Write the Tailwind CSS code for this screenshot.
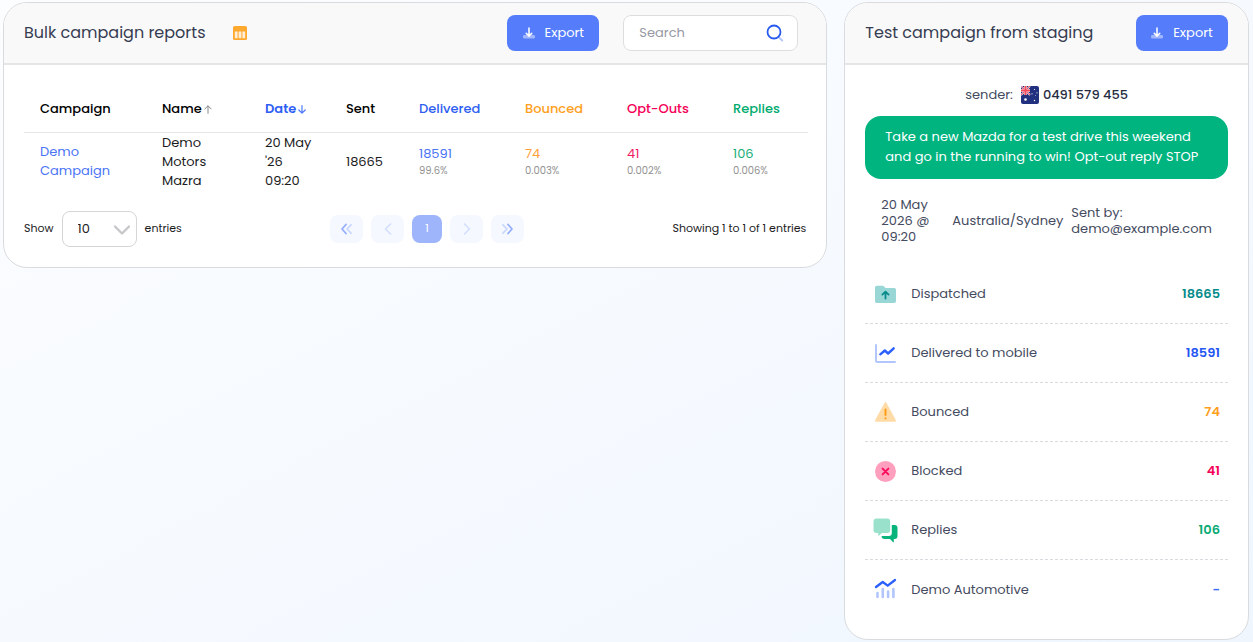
<!DOCTYPE html>
<html lang="en">
<head>
<meta charset="utf-8">
<meta name="viewport" content="width=device-width, initial-scale=1">
<title>Bulk campaign reports</title>
<script src="https://cdn.jsdelivr.net/npm/@tailwindcss/browser@4"></script>
</head>
<body class="min-h-screen bg-linear-to-br from-[#fcfdff] via-[#f6faff] to-[#eff6fe] font-[Poppins,Inter,sans-serif] text-[13px] text-black">
<main class="flex items-start gap-[17px] pt-[2px] pr-1 pb-[3px] pl-[3px]">

  <section class="min-w-0 flex-[825_1_0%] overflow-hidden rounded-3xl border border-[#d9dbde] bg-white">
    <header class="flex items-center border-b-2 border-[#e4e5e7] bg-[#f9f9f9] py-3 pr-7 pl-5">
      <h1 class="text-[16px] leading-6 text-[#363c52]">Bulk campaign reports</h1>
      <button type="button" aria-label="Choose columns" class="ml-[27px]">
        <svg width="14" height="14" viewBox="0 0 14 14"><rect width="14" height="14" rx="1.5" fill="#ffa92e"/><path d="M1.8 5.5h2.8v6.8H1.8zM5.6 5.5h2.8v6.8H5.6zM9.4 5.5h2.8v6.8H9.4z" fill="#ffeed5"/></svg>
      </button>
      <button type="button" class="ml-auto flex h-9 w-[92px] items-center justify-center gap-2.5 rounded-lg bg-[#557dfb] text-white">
        <svg width="12" height="13" viewBox="0 0 13 14"><path d="M1.5 8.5H4l2.5 2 2.500-2h2.500a1.500 1.500 0 0 1 1.500 1.500v1a1.500 1.500 0 0 1-1.500 1.500h-10A1.500 1.500 0 0 1 0 11v-1a1.500 1.500 0 0 1 1.500-1.500z" fill="#fff" opacity=".45"/><path d="M6.500 1.200v8M3.500 6.800l3 3 3-3" fill="none" stroke="#fff" stroke-width="1.700" stroke-linecap="round" stroke-linejoin="round"/></svg>
        Export
      </button>
      <label class="ml-6 flex h-9 w-[175px] items-center rounded-lg border border-[#dcdee0] bg-white pr-3 pl-[15px]">
        <input type="text" placeholder="Search" aria-label="Search" class="min-w-0 flex-1 bg-transparent outline-none placeholder:text-[#9699a2]">
        <svg width="20" height="20" viewBox="0 0 20 20" fill="none"><path d="M13.500 14l3.700 3.500" stroke="#b8c8fc" stroke-width="2" stroke-linecap="round"/><circle cx="9" cy="9" r="6.500" stroke="#285af0" stroke-width="1.800"/></svg>
      </label>
    </header>

    <div class="p-5">
      <table class="w-full table-fixed text-left">
        <colgroup><col class="w-[122px]"><col class="w-[103px]"><col class="w-[81px]"><col class="w-[73px]"><col class="w-[106px]"><col class="w-[102px]"><col class="w-[106px]"><col class="w-[91px]"></colgroup>
        <thead>
          <tr class="h-[47px] border-b border-[#e4e5e7] whitespace-nowrap">
            <th class="pl-4 font-medium">Campaign</th>
            <th class="pl-4 font-medium">Name<svg class="ml-[2px] inline-block align-[-1px]" width="8" height="9" viewBox="0 0 8 9" fill="none" stroke="#85878c" stroke-linecap="round" stroke-linejoin="round"><path d="M4 8.300V1M.8 4L4 .8 7.200 4"/></svg></th>
            <th class="pl-4 font-semibold text-[#2e60f5]">Date<svg class="ml-[2px] inline-block align-[-1px]" width="8" height="9" viewBox="0 0 8 9" fill="none" stroke="#4c78fa" stroke-width="1.200" stroke-linecap="round" stroke-linejoin="round"><path d="M4 .7V8M.8 5L4 8.200 7.200 5"/></svg></th>
            <th class="pl-4 font-medium">Sent</th>
            <th class="pl-4 font-medium text-[#2f5ff0]">Delivered</th>
            <th class="pl-4 font-medium text-[#ff9f22]">Bounced</th>
            <th class="pl-4 font-medium text-[#f50057]">Opt-Outs</th>
            <th class="pl-4 font-medium text-[#00ac70]">Replies</th>
          </tr>
        </thead>
        <tbody>
          <tr class="leading-[19px] text-[#1c1c1e]">
            <td class="pl-4"><a href="#" class="text-[#4a74f5]">Demo<br>Campaign</a></td>
            <td class="pl-4">Demo<br>Motors<br>Mazra</td>
            <td class="pl-4">20 May<br>'26<br>09:20</td>
            <td class="pl-4">18665</td>
            <td class="pl-4"><a href="#" class="block text-[#4a74f5]">18591</a><small class="block text-[10px] leading-4 text-[#929292]">99.6%</small></td>
            <td class="pl-4"><a href="#" class="block text-[#ff9f3a]">74</a><small class="block text-[10px] leading-4 text-[#929292]">0.003%</small></td>
            <td class="pl-4"><a href="#" class="block text-[#f01e62]">41</a><small class="block text-[10px] leading-4 text-[#929292]">0.002%</small></td>
            <td class="pl-4"><a href="#" class="block text-[#19ae79]">106</a><small class="block text-[10px] leading-4 text-[#929292]">0.006%</small></td>
          </tr>
        </tbody>
      </table>

      <div class="mt-[21px] flex items-center justify-between text-[11px] text-[#1c1c1e]">
        <div class="flex items-center gap-2">
          <label for="size">Show</label>
          <div class="relative">
            <select id="size" class="h-9 w-[75px] appearance-none rounded-lg border border-[#d3d5d7] bg-white pl-[15px] text-[13px] outline-none"><option>10</option><option>25</option><option>50</option></select>
            <svg class="pointer-events-none absolute top-[13px] right-[6px]" width="18" height="12" viewBox="0 0 18 12" fill="none" stroke="#c5c6c8" stroke-width="2.300" stroke-linecap="round" stroke-linejoin="round"><path d="M2 2.500L9 9.500 16 2.500"/></svg>
          </div>
          <span>entries</span>
        </div>
        <nav aria-label="Pages" class="flex gap-2">
          <button type="button" aria-label="First" class="flex h-7 w-[33px] items-center justify-center rounded-lg bg-[#f5f8ff]"><svg width="13" height="12" viewBox="0 0 13 12" fill="none" stroke-width="1.800" stroke-linecap="round" stroke-linejoin="round"><path d="M11 1.800L7 6l4 4.200" stroke="#c9d7fd"/><path d="M6 1.500L2 6l4 4.500" stroke="#94aefc"/></svg></button>
          <button type="button" aria-label="Previous" class="flex h-7 w-[33px] items-center justify-center rounded-lg bg-[#f5f8ff]"><svg width="8" height="12" viewBox="0 0 8 12" fill="none" stroke="#d3dffd" stroke-width="1.700" stroke-linecap="round" stroke-linejoin="round"><path d="M6.500 1L1.500 6l5 5"/></svg></button>
          <button type="button" aria-current="page" class="h-7 w-[30px] rounded-lg bg-[#9fb5fb] text-white">1</button>
          <button type="button" aria-label="Next" class="flex h-7 w-[33px] items-center justify-center rounded-lg bg-[#f5f8ff]"><svg width="8" height="12" viewBox="0 0 8 12" fill="none" stroke="#d3dffd" stroke-width="1.700" stroke-linecap="round" stroke-linejoin="round"><path d="M1.500 1l5 5-5 5"/></svg></button>
          <button type="button" aria-label="Last" class="flex h-7 w-[33px] items-center justify-center rounded-lg bg-[#f5f8ff]"><svg width="13" height="12" viewBox="0 0 13 12" fill="none" stroke-width="1.800" stroke-linecap="round" stroke-linejoin="round"><path d="M2 1.800L6 6l-4 4.200" stroke="#c9d7fd"/><path d="M7 1.500L11 6l-4 4.500" stroke="#94aefc"/></svg></button>
        </nav>
        <p>Showing 1 to 1 of 1 entries</p>
      </div>
    </div>
  </section>

  <section class="min-w-0 flex-[404_1_0%] overflow-hidden rounded-3xl border border-[#d9dbde] bg-white text-[#444b60]">
    <header class="flex items-center border-b-2 border-[#e4e5e7] bg-[#f9f9f9] px-5 py-3">
      <h2 class="text-[16px] leading-6 text-[#363c52]">Test campaign from staging</h2>
      <button type="button" class="ml-auto flex h-9 w-[92px] items-center justify-center gap-2.5 rounded-lg bg-[#557dfb] text-white">
        <svg width="12" height="13" viewBox="0 0 13 14"><path d="M1.5 8.5H4l2.5 2 2.500-2h2.500a1.500 1.500 0 0 1 1.500 1.500v1a1.500 1.500 0 0 1-1.500 1.500h-10A1.500 1.500 0 0 1 0 11v-1a1.500 1.500 0 0 1 1.500-1.500z" fill="#fff" opacity=".45"/><path d="M6.500 1.200v8M3.500 6.800l3 3 3-3" fill="none" stroke="#fff" stroke-width="1.700" stroke-linecap="round" stroke-linejoin="round"/></svg>
        Export
      </button>
    </header>

    <div class="p-5">
      <div class="flex h-5 items-center justify-center">
        <span>sender:</span>
        <svg class="mr-1 ml-2" width="18" height="18" viewBox="0 0 18 18" role="img" aria-label="Australia">
          <clipPath id="flag"><rect width="18" height="18" rx="2"/></clipPath>
          <g clip-path="url(#flag)"><path fill="#21317f" d="M0 0h18v18H0z"/><path d="M0 0l9 9M9 0L0 9" stroke="#e9dbe8" stroke-width="1.800"/><path d="M0 0l9 9M9 0L0 9" stroke="#f2495c" stroke-width=".9"/><path d="M4.500 0v9M0 4.500h9" stroke="#f3dfe6" stroke-width="2.800"/><path d="M4.500 0v9M0 4.500h9" stroke="#f2495c" stroke-width="1.900"/><g fill="#fff"><circle cx="4.500" cy="13.500" r="1.300"/><circle cx="13.500" cy="3.500" r=".6"/><circle cx="11" cy="7.800" r=".6"/><circle cx="16" cy="6.800" r=".6"/><circle cx="13.500" cy="14.500" r=".7"/><circle cx="14.500" cy="9.500" r=".4"/></g></g>
        </svg>
        <strong class="font-medium text-[#262c42]">0491 579 455</strong>
      </div>
      <p class="mt-[11px] rounded-2xl bg-[#00b47f] px-5 pt-[11px] pb-3 leading-5 text-white">Take a new Mazda for a test drive this weekend<br>and go in the running to win! Opt-out reply STOP</p>
      <div class="mb-[2px] flex h-[84px] items-center gap-2 pl-4 leading-4">
        <p class="w-[63px]">20 May<br>2026 @<br>09:20</p>
        <p class="w-[111px]">Australia/Sydney</p>
        <p>Sent by:<br>demo@example.com</p>
      </div>

      <dl class="divide-y divide-dashed divide-[#d9dbde]">
        <div class="flex h-[59px] items-center px-2">
          <dt class="flex items-center gap-[13px]"><svg width="25" height="25" viewBox="0 0 25 25" fill="none"><path d="M2 5.500a1.700 1.700 0 0 1 1.700-1.700h6.500l2.300 2.200h8.800A1.700 1.700 0 0 1 23 7.700v11.500a1.700 1.700 0 0 1-1.700 1.700H3.700A1.700 1.700 0 0 1 2 19.200z" fill="#99d6d6"/><path d="M12.500 16.500v-6.300M9.400 12.600l3.100-3 3.100 3" stroke="#078b8b" stroke-width="1.800" stroke-linecap="round" stroke-linejoin="round"/></svg>Dispatched</dt>
          <dd class="ml-auto font-semibold text-[#078b8b]">18665</dd>
        </div>
        <div class="flex h-[59px] items-center px-2">
          <dt class="flex items-center gap-[13px]"><svg width="25" height="25" viewBox="0 0 25 25" fill="none" stroke-linecap="round" stroke-linejoin="round"><path d="M3 4v15.500a1.500 1.500 0 0 0 1.500 1.500H22" stroke="#b2c5fc" stroke-width="2"/><path d="M7.300 13.300l4.500-3.800 3.300 3 5.600-5.200" stroke="#2c60ff" stroke-width="2.400"/></svg>Delivered to mobile</dt>
          <dd class="ml-auto font-semibold text-[#2456f4]">18591</dd>
        </div>
        <div class="flex h-[59px] items-center px-2">
          <dt class="flex items-center gap-[13px]"><svg width="25" height="25" viewBox="0 0 25 25"><path d="M11.600 2.800a1.050 1.050 0 0 1 1.800 0l9.400 17.200a1.200 1.200 0 0 1-1.050 1.800H3.250a1.200 1.200 0 0 1-1.050-1.800z" fill="#ffdba8"/><path d="M12.500 9.500V15M12.500 18.200v.2" stroke="#ff9d14" stroke-width="2" stroke-linecap="round"/></svg>Bounced</dt>
          <dd class="ml-auto font-semibold text-[#ff9f1f]">74</dd>
        </div>
        <div class="flex h-[59px] items-center px-2">
          <dt class="flex items-center gap-[13px]"><svg width="25" height="25" viewBox="0 0 25 25"><circle cx="12.500" cy="12.500" r="10.500" fill="#ff9fbe"/><path d="M9.600 9.600l5.800 5.800M15.400 9.600l-5.800 5.800" stroke="#fa0b5b" stroke-width="1.900" stroke-linecap="round"/></svg>Blocked</dt>
          <dd class="ml-auto font-semibold text-[#f50057]">41</dd>
        </div>
        <div class="flex h-[59px] items-center px-2">
          <dt class="flex items-center gap-[13px]"><svg width="25" height="25" viewBox="0 0 25 25"><path d="M18.800 7h2.700a3 3 0 0 1 3 3v8a3 3 0 0 1-3 3h-.7v3c0 .4-.4.6-.7.300L17 21h-5.500a3 3 0 0 1-2.900-3h7.200a3 3 0 0 0 3-3z" fill="#08b37c"/><path d="M3.500.5h10.700a3 3 0 0 1 3 3v8.500a3 3 0 0 1-3 3H8.800l-2.900 2.700c-.3.300-.7.100-.7-.300V15H3.500a3 3 0 0 1-3-3V3.500a3 3 0 0 1 3-3z" fill="#99e1cb"/></svg>Replies</dt>
          <dd class="ml-auto font-semibold text-[#08ab73]">106</dd>
        </div>
        <div class="flex h-[59px] items-center px-2">
          <dt class="flex items-center gap-[13px]"><svg width="25" height="25" viewBox="0 0 25 25" fill="none" stroke-linecap="round" stroke-linejoin="round"><path d="M4.500 16v4M9.800 12v8M15.100 14.500V20M20.400 12v8" stroke="#b2c5fc" stroke-width="2.600"/><path d="M3 10l6.700-5 5 3.700L22 3" stroke="#2c60ff" stroke-width="2.300"/></svg>Demo Automotive</dt>
          <dd class="ml-auto font-semibold text-[#3e6cf8]">-</dd>
        </div>
      </dl>
    </div>
  </section>
</main>
</body>
</html>
